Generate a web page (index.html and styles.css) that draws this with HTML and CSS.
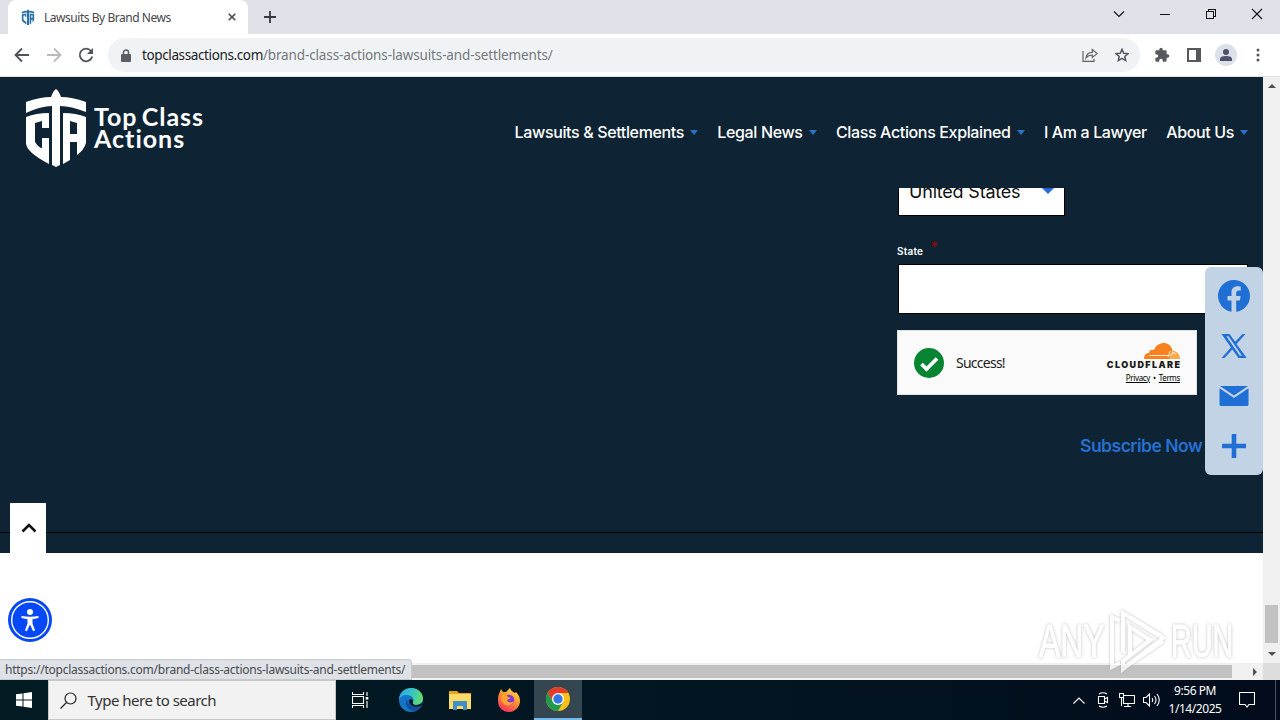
FILE: index.html
```html
<!DOCTYPE html>
<html lang="en">
<head>
<meta charset="utf-8">
<title>Lawsuits By Brand News</title>
<link rel="stylesheet" href="styles.css">
</head>
<body>
<div class="tabstrip">
  <div class="tab">
    <svg class="favicon" width="14" height="16" viewBox="0 0 60 78"><path d="M0 13Q14 8 25 8L30 0 35 8Q46 8 60 13V23Q45 17 35 17V78H25V17Q15 17 0 23Z M0 26L22 22V38H15V31L8 33V53Q14 60 22 63V75Q0 62 0 54Z M38 22L60 26V54Q58 60 52 65V53H46V70L38 75Z M46 31V43H52V32Z"/></svg>
    <span class="tab-title">Lawsuits By Brand News</span>
    <svg class="tab-close" width="8" height="8" viewBox="0 0 8 8"><path d="M.7.7l6.6 6.6M7.3.7L.7 7.3"/></svg>
  </div>
  <svg class="new-tab" width="12" height="12" viewBox="0 0 12 12"><path d="M6 0v12M0 6h12"/></svg>
  <div class="window-controls">
    <svg width="12" height="12" viewBox="0 0 12 12"><path d="M1 3.500l5 5 5-5"/></svg>
    <svg width="12" height="12" viewBox="0 0 12 12" class="crisp"><path d="M1 6.500h10"/></svg>
    <svg width="12" height="12" viewBox="0 0 12 12" class="crisp"><path d="M1.500 3.500h7v7h-7zM3.500 3V1.500h7v7H9"/></svg>
    <svg width="12" height="12" viewBox="0 0 12 12"><path d="M1 1l10 10M11 1L1 11"/></svg>
  </div>
</div>
<div class="toolbar">
  <div class="nav-buttons">
    <svg width="16" height="16" viewBox="0 0 16 16"><path d="M15 8H2M8 1.500L1.500 8 8 14.500"/></svg>
    <svg class="disabled" width="16" height="16" viewBox="0 0 16 16"><path d="M1 8h13M8 1.500L14.500 8 8 14.500"/></svg>
    <svg width="16" height="16" viewBox="0 0 16 16"><path d="M13 4A6.300 6.300 0 1 0 14.200 9.500"/><path class="solid" d="M15 1v6H9z"/></svg>
  </div>
  <div class="omnibox">
    <svg class="lock" width="10" height="13" viewBox="0 0 10 13"><path d="M1 5h8q1 0 1 1v6q0 1-1 1H1q-1 0-1-1V6q0-1 1-1z"/><path d="M2.500 5V3.500a2.500 2.500 0 0 1 5 0V5" class="shackle"/></svg>
    <span class="url"><b>topclassactions.com</b><span class="url-path">/brand-class-actions-lawsuits-and-settlements/</span></span>
    <svg class="share" width="16" height="14" viewBox="0 0 16 14"><path d="M1 3v10.300h11V11M4 10c.5-4 3-5.700 6.300-5.700V1.500L15 5.600 10.300 9.500V7C7.500 7 5.500 8 4 10z"/></svg>
    <svg class="star" width="14" height="14" viewBox="0 0 14 14"><path d="M7 1.300l1.700 3.900 4.300.4-3.200 2.800.9 4.200L7 10.400l-3.700 2.200.9-4.200L1 5.600l4.300-.4z"/></svg>
  </div>
  <div class="toolbar-actions">
    <svg class="puzzle" width="16" height="16" viewBox="0 0 24 24"><path d="M20.500 11H19V7a2 2 0 0 0-2-2h-4V3.500a2.500 2.500 0 0 0-5 0V5H4a2 2 0 0 0-2 2v3.800h1.500a2.700 2.700 0 0 1 0 5.400H2V20a2 2 0 0 0 2 2h3.800v-1.500a2.700 2.700 0 0 1 5.400 0V22H17a2 2 0 0 0 2-2v-4h1.500a2.500 2.500 0 0 0 0-5z"/></svg>
    <svg class="panel" width="14" height="14" viewBox="0 0 14 14"><path d="M0 0h14v14H0zM2 2v10h7V2z"/></svg>
    <svg class="avatar" width="22" height="22" viewBox="0 0 22 22"><circle class="avatar-bg" cx="11" cy="11" r="11"/><circle cx="11" cy="8" r="3"/><path d="M5 17v-2q0-3 6-3t6 3v2z"/></svg>
    <svg class="dots" width="4" height="14" viewBox="0 0 4 14"><circle cx="2" cy="2" r="1.500"/><circle cx="2" cy="7" r="1.500"/><circle cx="2" cy="12" r="1.500"/></svg>
  </div>
</div>
<div class="viewport">
  <div class="page">
    <header class="site-header">
      <div class="brand">
        <svg width="60" height="78" viewBox="0 0 60 78"><path d="M0 13Q14 8 25 8Q27 2 30 0Q33 2 35 8Q46 8 60 13V23Q45 17 34 17V76L30 78 26 76V17Q15 17 0 24Z M0 28Q10 24 23 24V39H16V32L9 34V53Q13 59 16 59V49H23V75Q0 63 0 54Z M37 24Q50 24 60 28V54Q58 61 51 66V53H44V71L37 75Z M44 32V45H51V34Z"/></svg>
        <div class="brand-name"><span>Top Class</span><span>Actions</span></div>
      </div>
      <nav class="site-nav">
        <span>Lawsuits &amp; Settlements</span><i></i>
        <span>Legal News</span><i></i>
        <span>Class Actions Explained</span><i></i>
        <span>I Am a Lawyer</span>
        <span>About Us</span><i></i>
      </nav>
    </header>
    <main class="newsletter">
      <form class="signup">
        <div class="select"><span>United States</span><i></i></div>
        <div class="label">State<sup>*</sup></div>
        <div class="field"></div>
        <div class="captcha">
          <svg width="30" height="30" viewBox="0 0 30 30"><circle cx="15" cy="15" r="15" fill="#078431"/><path d="M7.500 16l5 5L23 10.500" fill="none" stroke="#fff" stroke-width="3.800"/></svg>
          <span class="success">Success!</span>
          <div class="cloudflare">
            <svg width="36" height="16" viewBox="0 0 36 16"><path fill="#f98120" d="M0 16C0 12 2 10 5 10 5 7 8 6 10 7 12 2 16 0 20 0 25 0 28 4 28.500 8L26 16z"/><path fill="#fbaa48" d="M25 16l2-8c5-1 9 3 9 8z"/><path d="M5 12.500h21l3-2M26 8l-2 6M28 9l4 2" stroke="#fff" stroke-width=".8" fill="none"/></svg>
            <b>CLOUDFLARE</b>
            <div class="legal"><u>Privacy</u><span>•</span><u>Terms</u></div>
          </div>
        </div>
        <div class="subscribe">Subscribe Now</div>
      </form>
      <div class="divider"></div>
    </main>
    <div class="scroll-top"><svg width="16" height="10" viewBox="0 0 16 10"><path d="M1.500 8.500L8 2l6.500 6.500"/></svg></div>
    <svg class="accessibility" width="44" height="44" viewBox="0 0 44 44"><circle cx="22" cy="22" r="22" fill="#0648f5"/><circle cx="22" cy="22" r="18.300" fill="none" stroke="#fff" stroke-width="1.400"/><circle cx="22" cy="14" r="3" fill="#fff"/><path fill="#fff" d="M13.500 18q8.500 1.500 17 0v2l-6 1.200v4.300l2.600 7-2 .7-2.700-6h-.8l-2.700 6-2-.7 2.600-7v-4.300l-6-1.200z"/></svg>
    <div class="share-bar">
      <svg width="32" height="32" viewBox="0 0 32 32"><path d="M32 16A16 16 0 1 0 13.500 31.800V20.600h-4V16h4v-3.500c0-4 2.400-6.200 6-6.200 1.800 0 3.300.3 3.300.3v4h-2c-2 0-2.600 1.200-2.600 2.500V16h4.400l-.7 4.600h-3.700v11.200A16 16 0 0 0 32 16z"/></svg>
      <svg width="26" height="24" viewBox="0 0 26 24"><path fill-rule="evenodd" d="M.5 0H8.500l5.700 7.800L21.500 0h3l-9 10L25.700 24H17.500l-6.200-8.500L3.500 24h-3l9.500-10.500zM5.300 2.200l13.500 19.600h2.200L7.500 2.200z"/></svg>
      <svg width="30" height="20" viewBox="0 0 30 20"><path d="M1 0h28L15 9.500zM.5 2.200L15 12 29.500 2.200V18.500q0 1.500-1.500 1.500H2Q.5 20 .5 18.500z"/></svg>
      <svg width="24" height="24" viewBox="0 0 24 24"><path d="M9.700 0h4.600v9.700H24v4.600h-9.700V24H9.700v-9.700H0V9.700h9.700z"/></svg>
    </div>
  </div>
  <div class="vscroll"><i class="up"></i><div class="vthumb"></div><i class="down"></i></div>
  <div class="hscroll"><div class="hthumb"></div><i></i></div>
  <div class="corner"></div>
  <div class="watermark"><span>ANY</span><svg width="56" height="64" viewBox="0 0 56 64"><path d="M10 54L2 58V8l8 4M13 44V4L53 29 13 60v-8L40 31 20 18v29M13 4l38 23M15 58L53 32"/></svg><span>RUN</span></div>
  <div class="status"><span>https://topclassactions.com/brand-class-actions-lawsuits-and-settlements/</span></div>
</div>
<footer class="taskbar">
  <div class="start"><svg width="16" height="16" viewBox="0 0 16 16"><path d="M0 2.300L6.500 1.400V7.500H0zM7.500 1.200L16 0v7.500H7.500zM0 8.500h6.500v6.100L0 13.700zM7.500 8.500H16V16l-8.500-1.200z"/></svg></div>
  <div class="search"><svg width="17" height="17" viewBox="0 0 17 17"><circle cx="10.500" cy="6.500" r="5.500"/><path d="M6.500 10.500L.5 16.500"/></svg><span>Type here to search</span></div>
  <div class="app"><svg width="17" height="16" viewBox="0 0 17 16" fill="none" stroke="#fff" stroke-width="1.100"><path d="M.5 0v2.500h11V0M.5 4.500h11v7H.5zM.5 16v-2.500h11V16M15 0v4M15 9v7"/><path d="M13.700 5h2.600v2.600h-2.600z" fill="#fff" stroke="none"/></svg></div>
  <div class="app edge"><svg width="24" height="24" viewBox="0 0 24 24"><defs><linearGradient id="eg" x1="0" y1=".3" x2="1" y2=".5"><stop offset="0" stop-color="#27a7df"/><stop offset=".5" stop-color="#36c5c8"/><stop offset="1" stop-color="#66db66"/></linearGradient></defs><circle cx="12" cy="12" r="12" fill="#1674c8"/><path fill="url(#eg)" d="M0 12C0 5 5 0 12 0c7 0 12 5 12 10 0 5-4 7-7 7-2 0-4-1-3-3C16 10 12 7 8 7 4 7 1 9 0 12z"/><path fill="#124f9a" d="M8 11c-3 5 1 12 7 12 3-.5 6-3 7-5-5 2-13 1-14-7z"/><path fill="#031923" d="M14 14c-1 2 1 3 3 3 3 0 5-1 6.500-3 0 1-.5 3-1.500 4-5 2-12 0-12-5 0-3 5-2 4 1z"/></svg></div>
  <div class="app"><svg width="22" height="20" viewBox="0 0 22 20"><path fill="#e6a61b" d="M0 1h8l2 2h12v5H0z"/><path fill="#ffda68" d="M0 4h22v15H0z"/><path fill="#3f8fc6" d="M4 11h14v9h-4v-4H8v4H4z"/></svg></div>
  <div class="app"><svg width="24" height="24" viewBox="0 0 24 24"><defs><linearGradient id="fx" x1=".8" y1="0" x2=".25" y2="1"><stop offset="0" stop-color="#ffe34a"/><stop offset=".45" stop-color="#ff942e"/><stop offset="1" stop-color="#f82b63"/></linearGradient></defs><path fill="url(#fx)" d="M2 6l2-5 2 3 3 0 4-4c1 3 3 4 5 5l1-1c3 3 4 6 4 9 0 6-5 11-11 11S1 20 1 13c0-3 0-5 1-7z"/><circle cx="12" cy="12" r="5.300" fill="#8138d8"/><path fill="#ffa42b" d="M5 7c3-1 5 0 6 2l3 1-4 2c1 3 5 3 7 1-1 4-7 6-10 3-3-2-3-6-2-9z"/></svg></div>
  <div class="app active"><svg width="24" height="24" viewBox="0 0 24 24"><circle cx="12" cy="12" r="12" fill="#fbc116"/><path fill="#e33b2e" d="M1.600 6A12 12 0 0 1 22.400 6H12L7 15z"/><path fill="#229a4c" d="M1.600 6A12 12 0 0 0 12 24l5.200-9H7z"/><circle cx="12" cy="12" r="6" fill="#fff"/><circle cx="12" cy="12" r="4.700" fill="#3578e5"/></svg></div>
  <div class="tray">
    <svg width="12" height="7" viewBox="0 0 12 7"><path d="M.5 6.500L6 1l5.500 5.500"/></svg>
    <svg width="12" height="16" viewBox="0 0 12 16"><path d="M1.500 4.500h6v7h-6zM7.500 7l3-1.500v5l-3-1.500M2 2q4-2.500 8 0M2 14q4 2.500 8 0"/></svg>
    <svg width="16" height="14" viewBox="0 0 16 14"><path d="M4 2.500h11.500v8H4.500V5M.5.500h4v4h-4zM2.500 4.500V13M5 13.500h7M9 10.500v3"/></svg>
    <svg width="17" height="14" viewBox="0 0 17 14"><path d="M.5 4.500h2.500L6.500 1v12L3 9.500H.5zM9 5q1.500 2 0 4M11.500 3q3 4 0 8M14 1q4.500 6 0 12"/></svg>
    <div class="clock"><span>9:56 PM</span><span>1/14/2025</span></div>
    <svg width="16" height="16" viewBox="0 0 16 16"><path d="M.5.500h15v12H10L8 15l-2-2.500H.5z"/></svg>
    <div class="show-desktop"></div>
  </div>
</footer>
</body>
</html>
```
FILE: styles.css
```css
* { box-sizing: border-box; }
body { margin: 0; width: 1280px; height: 720px; overflow: hidden; font-family: "Noto Sans", "Open Sans", sans-serif; background: #fff; color: #222; }
svg { display: block; flex: none; }
span, b, u { white-space: nowrap; }

.tabstrip { height: 34px; background: #dee1e8; display: flex; align-items: center; padding-left: 8px; }
.tab { width: 240px; height: 34px; background: #fff; border-radius: 8px 8px 0 0; display: flex; align-items: center; padding: 0 12px 0 13px; }
.favicon { fill: #2970a8; }
.tab-title { margin-left: 9px; font-size: 12px; letter-spacing: -.46px; color: #45474a; flex: 1; }
.tab-close { stroke: #45484d; stroke-width: 1.6; }
.new-tab { margin-left: 16px; stroke: #37393e; stroke-width: 1.8; }
.window-controls { margin-left: auto; margin-right: 17px; display: flex; gap: 34px; padding-bottom: 6px; }
.window-controls svg { fill: none; stroke: #111; stroke-width: 1.1; }
.crisp { shape-rendering: crispEdges; }

.toolbar { height: 43px; border-bottom: 1px solid #dce1e6; display: flex; align-items: center; padding: 0 20px 0 14px; }
.nav-buttons { display: flex; gap: 16px; width: 94px; }
.nav-buttons svg { fill: none; stroke: #505357; stroke-width: 1.8; }
.nav-buttons .disabled { stroke: #b8babd; }
.nav-buttons .solid { fill: #505357; stroke: none; }
.omnibox { width: 1032px; height: 34px; border-radius: 17px; background: #f0f3f5; display: flex; align-items: center; padding: 0 11px 0 13px; }
.lock { fill: #5b5e63; }
.lock .shackle { fill: none; stroke: #5b5e63; stroke-width: 1.5; }
.url { margin-left: 11px; flex: 1; font-size: 13.5px; color: #74787c; }
.url b { color: #202124; font-weight: 400; letter-spacing: -.38px; }
.url-path { letter-spacing: -.13px; }
.share { fill: none; stroke: #606367; stroke-width: 1.2; margin-right: 17px; }
.star { fill: none; stroke: #55585d; stroke-width: 1.5; }
.toolbar-actions { flex: 1; display: flex; align-items: center; margin-left: 14px; fill: #55585d; }
.panel { margin-left: 17px; fill-rule: evenodd; }
.avatar { margin-left: 14px; fill: #4d5069; }
.avatar-bg { fill: #dce0e9; }
.dots { margin-left: 19px; }

.viewport { position: relative; height: 603px; display: grid; grid-template: 586px 17px / 1263px 17px; }
.page { position: relative; overflow: hidden; background: #fff; }
.site-header { height: 111px; background: #0e2333; display: flex; justify-content: space-between; padding: 12px 15px 0 26px; }
.brand { display: flex; gap: 8px; fill: #fff; }
.brand-name { padding-top: 16px; color: #fff; font: 700 25px/22px Lato, sans-serif; display: flex; flex-direction: column; letter-spacing: 1px; word-spacing: -3px; }
.site-nav { display: flex; align-items: center; height: 24px; margin-top: 31px; color: #fff; font: 500 16px/24px Inter, sans-serif; letter-spacing: -.36px; }
.site-nav i { border: 4.5px solid transparent; border-top: 5px solid #2c70c5; border-bottom: 0; margin-left: 6px; }
.site-nav span + span, .site-nav i + span { margin-left: 19.3px; }

.newsletter { height: 365px; background: #0e2333; overflow: hidden; padding-left: 897px; }
.select { width: 167px; height: 50px; margin: -22px 0 0 1px; border: 1px solid #000; background: #fff; display: flex; align-items: center; justify-content: space-between; padding: 2px 10px 0; color: #111; font: 400 18px/24px Inter, sans-serif; letter-spacing: -.2px; }
.select i { border: 6px solid transparent; border-top-color: #246bd2; border-bottom: 0; margin-top: -3px; }
.label { height: 48px; padding-top: 27px; color: #fff; font: 600 10px/16px Inter, sans-serif; letter-spacing: .2px; }
.label sup { color: #8d0710; font-size: 15px; line-height: 0; margin-left: 7px; vertical-align: 3px; }
.field { width: 350px; height: 50px; border: 1px solid #000; background: #fff; margin-left: 1px; }
.captcha { width: 300px; height: 65px; margin-top: 16px; border: 1px solid #e0e0e0; background: #fafafa; display: flex; align-items: center; padding: 0 16px; }
.success { font-size: 14px; color: #232323; margin-left: 12px; letter-spacing: -.75px; }
.cloudflare { margin-left: auto; display: flex; flex-direction: column; align-items: flex-end; color: #1b1b1b; }
.cloudflare b { font: 900 9px/10px Inter, sans-serif; letter-spacing: 1.4px; margin-right: -1.4px; margin-top: 1px; }
.legal { display: flex; gap: 3px; font-size: 8px; line-height: 11px; margin-top: 2px; letter-spacing: -.35px; color: #000; }
.legal u { text-underline-offset: 1px; }
.subscribe { margin: 39px 0 0 183px; color: #2670d1; font: 600 17.5px/24px Inter, sans-serif; letter-spacing: -.5px; }
.divider { height: 1px; margin: 74px 0 0 -897px; background: #000; }

.scroll-top { position: absolute; left: 10px; top: 426px; width: 36px; height: 50px; background: #fff; display: flex; align-items: center; justify-content: center; padding-left: 2px; }
.scroll-top svg { fill: none; stroke: #111; stroke-width: 2.5; }
.accessibility { position: absolute; left: 8px; top: 521px; }
.share-bar { position: absolute; right: 0; top: 190px; width: 58px; height: 208px; background: #c2d3e6; border-radius: 6px; display: grid; grid-template-rows: repeat(4, 50px); padding-top: 4px; place-items: center; fill: #206fd5; }
.watermark { position: absolute; left: 1039px; top: 532px; width: 194px; height: 64px; display: flex; align-items: center; justify-content: space-between; color: #fff; font: 400 47px/64px "Liberation Sans", sans-serif; filter: drop-shadow(0 0 1.5px #aaa); opacity: .75; }
.watermark span { width: 66px; transform: scaleX(.68); transform-origin: left; -webkit-text-stroke: 1px #fff; }
.watermark span:last-child { width: 62px; transform: scaleX(.61); }
.watermark svg { fill: none; stroke: #fff; stroke-width: 4; }

.vscroll { background: #f0f0f0; display: flex; flex-direction: column; align-items: center; padding: 7px 0; }
.vscroll i { border: 4px solid transparent; }
.vscroll .up { border-bottom-color: #505050; border-top: 0; }
.vscroll .down { border-top-color: #505050; border-bottom: 0; }
.vthumb { width: 13px; height: 38px; background: #c1c1c1; margin: auto 0 9px; }
.hscroll { background: #f0f0f0; display: flex; align-items: center; justify-content: flex-end; padding-right: 6px; }
.hthumb { width: 1215px; height: 13px; background: #c1c1c1; margin-right: 21px; }
.hscroll i { border: 4px solid transparent; border-left-color: #505050; border-right: 0; }
.corner { background: #dcdcdc; }
.status { position: absolute; left: 0; bottom: 0; width: 412px; height: 21px; background: #dee1e6; border: 1px solid #c7cacd; border-width: 1px 1px 1px 0; border-radius: 0 4px 0 0; padding-left: 5px; font-size: 12px; line-height: 20px; color: #484b4e; letter-spacing: -.245px; }

.taskbar { height: 40px; background: linear-gradient(90deg, #021a22, #021621 55%, #010b1b); display: flex; }
.start { width: 48px; display: grid; place-items: center; fill: #fff; }
.search { width: 288px; background: #f2f2f2; border: 1px solid #c7c7c7; display: flex; align-items: center; gap: 10.5px; padding-left: 11px; font-size: 15px; color: #333; letter-spacing: -.5px; }
.search svg { fill: none; stroke: #222; stroke-width: 1.2; }
.app { width: 49px; display: grid; place-items: center; }
.edge { margin-left: 1px; }
.active { width: 48px; margin-left: 1px; background: #34464f; border-bottom: 2px solid #76b9ed; }
.tray { margin-left: auto; padding-right: 4px; display: flex; align-items: center; color: #fff; }
.tray svg { fill: none; stroke: #fff; stroke-width: 1.1; margin-right: 12px; }
.tray svg:nth-of-type(3) { margin-right: 8px; }
.tray svg:nth-of-type(2) { margin-right: 10px; }
.tray svg:nth-of-type(4) { margin-right: 8px; }
.tray svg:nth-of-type(5) { margin-right: 0; }
.clock { width: 54px; margin-right: 17px; display: flex; flex-direction: column; align-items: center; font-size: 12px; line-height: 18px; letter-spacing: -.45px; }
.show-desktop { width: 1px; height: 40px; margin-left: 20px; background: #4a525e; }
```
